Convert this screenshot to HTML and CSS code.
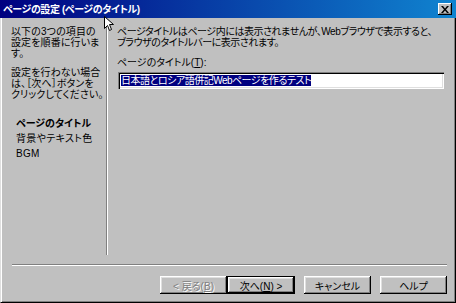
FILE: index.html
```html
<!DOCTYPE html>
<html lang="ja">
<head>
    <meta charset="UTF-8">
    <title>ページの設定</title>
    <link rel="stylesheet" href="styles.css">
</head>
<body>
    <div class="window">
        <div class="titlebar">
            <span class="title">ページの設定 (ページのタイトル)</span>
            <span class="close-btn">
                <svg width="8" height="7" viewBox="0 0 8 7"><path d="M0 0 L2 0 L4 2.5 L6 0 L8 0 L5 3.5 L8 7 L6 7 L4 4.5 L2 7 L0 7 L3 3.5 Z" fill="#000"/></svg>
            </span>
        </div>
        <div class="frame">
            <div class="content">
                <div class="sidebar">
                    <p class="side-text">以下の3つの項目の<br>設定を順番に行いま<br>す。</p>
                    <p class="side-text">設定を行わない場合<br>は、［次へ］ボタンを<br>クリックしてください。</p>
                    <ul class="steps">
                        <li class="current">ページのタイトル</li>
                        <li>背景やテキスト色</li>
                        <li>BGM</li>
                    </ul>
                </div>
                <div class="divider"></div>
                <div class="main">
                    <p class="desc">ページタイトルはページ内には表示されませんが、Webブラウザで表示すると、<br>ブラウザのタイトルバーに表示されます。</p>
                    <label class="field-label">ページのタイトル(<u>T</u>):</label>
                    <div class="text-box"><span class="selected">日本語とロシア語併記Webページを作るテスト</span></div>
                </div>
            </div>
            <div class="separator"></div>
            <div class="buttons">
                <button class="btn" disabled>&lt; 戻る(<u>B</u>)</button>
                <button class="btn btn-default">次へ(<u>N</u>) &gt;</button>
                <button class="btn btn-gap">キャンセル</button>
                <button class="btn btn-gap">ヘルプ</button>
            </div>
        </div>
        <svg class="cursor" width="12" height="16" viewBox="0 0 12 16">
            <path d="M0.5 0.5 L0.5 12.5 L3.5 9.5 L5.5 14.5 L7.5 13.5 L5.5 8.5 L9.5 8.5 Z" fill="#fff" stroke="#000" stroke-width="1"/>
        </svg>
    </div>
</body>
</html>
```

FILE: styles.css
```css
* {
    box-sizing: border-box;
}
body {
    margin: 0;
    background-color: #c0c0c0;
    font-family: "Liberation Sans", "Noto Sans CJK JP", sans-serif;
    font-size: 10px;
    line-height: 11px;
    color: #000;
    font-feature-settings: "palt";
}
p, ul {
    margin: 0;
    padding: 0;
}
.window {
    position: relative;
    width: 456px;
    height: 303px;
    display: flex;
    flex-direction: column;
    background-color: #c0c0c0;
}
.titlebar {
    height: 18px;
    display: flex;
    align-items: center;
    justify-content: space-between;
    padding: 0 4px 0 3px;
    background: linear-gradient(to right, #000080, #1084d0);
    color: #fff;
    font-weight: bold;
    font-size: 10px;
    letter-spacing: -0.4px;
}
.close-btn {
    width: 14px;
    height: 12px;
    display: flex;
    align-items: center;
    justify-content: center;
    background-color: #c0c0c0;
    box-shadow: inset -1px -1px #000, inset 1px 1px #fff, inset -2px -2px #808080;
}
.frame {
    flex: 1;
    display: flex;
    flex-direction: column;
    padding: 2px 8px 0 10px;
    border-left: 1px solid #dfdfdf;
    border-right: 1px solid #000;
    border-bottom: 1px solid #000;
    box-shadow: inset 1px 0 #fff, inset -1px -1px #808080;
}
.content {
    display: flex;
    height: 235px;
}
.sidebar {
    width: 95px;
    padding-top: 6px;
    letter-spacing: 0.1px;
}
.side-text + .side-text {
    margin-top: 8px;
}
.steps {
    list-style: none;
    margin-top: 16px;
    padding-left: 5px;
    line-height: 15px;
    letter-spacing: 0.3px;
}
.steps .current {
    font-weight: bold;
    letter-spacing: 0;
}
.divider {
    width: 2px;
    border-left: 1px solid #808080;
    border-right: 1px solid #fff;
}
.main {
    flex: 1;
    padding: 6px 0 0 9px;
}
.desc {
    margin-bottom: 9px;
    white-space: nowrap;
    letter-spacing: -0.45px;
}
.field-label {
    display: block;
}
.text-box {
    width: 326px;
    height: 17px;
    margin: 4px 0 0 1px;
    padding: 2px 3px;
    background-color: #fff;
    box-shadow: inset 1px 1px #808080, inset 2px 2px #000, inset -1px -1px #fff, inset -2px -2px #dfdfdf;
    line-height: 13px;
    white-space: nowrap;
    letter-spacing: -0.5px;
}
.selected {
    background-color: #000080;
    color: #fff;
}
.separator {
    height: 2px;
    margin: 9px 0 0 1px;
    border-top: 1px solid #808080;
    border-bottom: 1px solid #fff;
}
.buttons {
    display: flex;
    justify-content: flex-end;
    margin-top: 10px;
}
.btn {
    width: 67px;
    height: 18px;
    padding: 0;
    border: none;
    background-color: #c0c0c0;
    font-family: inherit;
    font-size: 10px;
    font-feature-settings: "palt";
    color: #000;
    box-shadow: inset -1px -1px #000, inset 1px 1px #fff, inset -2px -2px #808080, inset 2px 2px #dfdfdf;
}
.btn:disabled {
    color: #808080;
    text-shadow: 1px 1px #fff;
}
.btn-default {
    width: 68px;
    border: 1px solid #000;
}
.btn-gap {
    margin-left: 9px;
}
.cursor {
    position: absolute;
    left: 104px;
    top: 16px;
}
```
